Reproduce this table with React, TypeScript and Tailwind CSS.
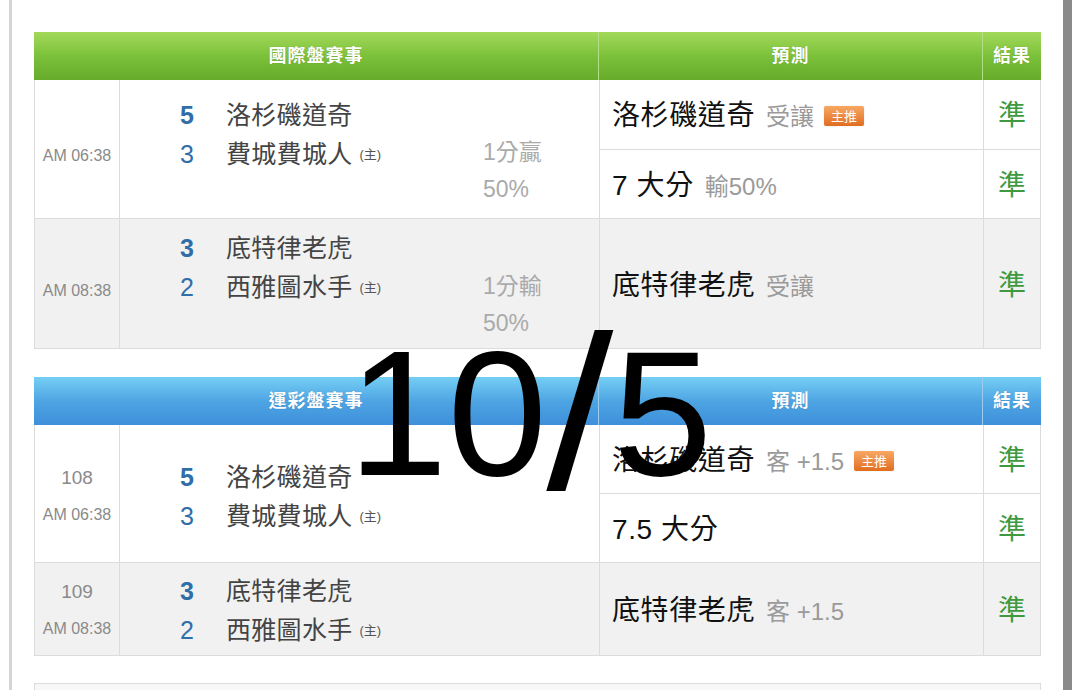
import React from 'react';

type Team = { score: string; bold?: boolean; name: string; home?: boolean };
type Pred = { main: string; sub?: string; badge?: boolean; result: string };
type RowData = {
  times: string[];
  teams: Team[];
  handicap?: string[];
  preds: Pred[];
  gray?: boolean;
  h: string;
  timePad: string;
  matchPad: string;
};

const Badge = () => (
  <span className="self-center ml-[10px] inline-flex items-center justify-center w-[40px] h-[20px] rounded-[2px] bg-linear-to-b from-[#f7a862] to-[#e06d1d] text-white text-[13px] leading-none shadow-[0_0_1px_rgba(0,0,0,0.3)]">
    主推
  </span>
);

function MatchRow({ r }: { r: RowData }) {
  return (
    <div
      className={`grid grid-cols-[85px_480px_1fr] border-b border-[#dcdcdc] ${r.gray ? 'bg-[#f1f1f1]' : 'bg-white'} ${r.h}`}
    >
      <div className={`flex flex-col items-center justify-center border-r border-[#dcdcdc] text-[#8a8a8a] ${r.timePad}`}>
        {r.times.map((t, i) =>
          r.times.length > 1 && i === 0 ? (
            <div key={i} className="text-[19px] leading-[37px]">{t}</div>
          ) : (
            <div key={i} className="text-[16px] leading-[37px]">{t}</div>
          )
        )}
      </div>
      <div className={`flex items-center pl-[55px] border-r border-[#dcdcdc] ${r.matchPad}`}>
        <div className="flex">
          <div className="w-[308px]">
            {r.teams.map((t, i) => (
              <div key={i} className="flex items-center h-[39px]">
                <span className={`w-[24px] text-center text-[25px] text-[#2f6ea8] ${t.bold ? 'font-bold' : ''}`}>{t.score}</span>
                <span className="ml-[27px] text-[25px] tracking-[0.3px] text-[#444]">{t.name}</span>
                {t.home && <span className="ml-[7px] text-[13px] text-[#555]">(主)</span>}
              </div>
            ))}
          </div>
          {r.handicap && (
            <div className="mt-[38px] text-[23px] leading-[37px] text-[#aaaaaa]">
              {r.handicap.map((h, i) => (
                <div key={i}>{h}</div>
              ))}
            </div>
          )}
        </div>
      </div>
      <div className="flex flex-col">
        {r.preds.map((p, i) => (
          <div
            key={i}
            className={`flex-1 grid grid-cols-[384px_1fr] ${i < r.preds.length - 1 ? 'border-b border-[#dcdcdc]' : ''}`}
          >
            <div className="flex items-baseline self-stretch pl-[12px] pt-[4px] border-r border-[#dcdcdc]">
              <div className="flex items-baseline self-center">
                <span className="text-[28px] tracking-[0.6px] text-[#111]">{p.main}</span>
                {p.sub && <span className="ml-[11px] text-[24px] text-[#9a9a9a]">{p.sub}</span>}
                {p.badge && <Badge />}
              </div>
            </div>
            <div className="flex items-center justify-center pt-[4px] text-[28px] text-[#3f9a3f]">{p.result}</div>
          </div>
        ))}
      </div>
    </div>
  );
}

function Table({ title, headerCls, dividerCls, rows }: { title: string; headerCls: string; dividerCls: string; rows: RowData[] }) {
  return (
    <div>
      <div className={`grid grid-cols-[565px_384px_1fr] h-[48px] text-white font-bold text-[18px] tracking-[1px] [text-shadow:0_0_1px_rgba(0,0,0,0.25)] ${headerCls}`}>
        <div className={`flex items-center justify-center border-r ${dividerCls}`}>{title}</div>
        <div className={`flex items-center justify-center border-r ${dividerCls}`}>預測</div>
        <div className="flex items-center justify-center">結果</div>
      </div>
      <div className="border-x border-[#dcdcdc]">
        {rows.map((r, i) => (
          <MatchRow key={i} r={r} />
        ))}
      </div>
    </div>
  );
}

const table1: RowData[] = [
  {
    times: ['AM 06:38'],
    teams: [
      { score: '5', bold: true, name: '洛杉磯道奇' },
      { score: '3', name: '費城費城人', home: true },
    ],
    handicap: ['1分贏', '50%'],
    preds: [
      { main: '洛杉磯道奇', sub: '受讓', badge: true, result: '準' },
      { main: '7 大分', sub: '輸50%', result: '準' },
    ],
    h: 'h-[139px]',
    timePad: 'pt-[12px]',
    matchPad: 'pt-[6px]',
  },
  {
    times: ['AM 08:38'],
    teams: [
      { score: '3', bold: true, name: '底特律老虎' },
      { score: '2', name: '西雅圖水手', home: true },
    ],
    handicap: ['1分輸', '50%'],
    preds: [{ main: '底特律老虎', sub: '受讓', result: '準' }],
    gray: true,
    h: 'h-[130px]',
    timePad: 'pt-[14px]',
    matchPad: 'pt-[4px]',
  },
];

const table2: RowData[] = [
  {
    times: ['108', 'AM 06:38'],
    teams: [
      { score: '5', bold: true, name: '洛杉磯道奇' },
      { score: '3', name: '費城費城人', home: true },
    ],
    preds: [
      { main: '洛杉磯道奇', sub: '客 +1.5', badge: true, result: '準' },
      { main: '7.5 大分', result: '準' },
    ],
    h: 'h-[138px]',
    timePad: 'pt-[4px]',
    matchPad: 'pt-[8px]',
  },
  {
    times: ['109', 'AM 08:38'],
    teams: [
      { score: '3', bold: true, name: '底特律老虎' },
      { score: '2', name: '西雅圖水手', home: true },
    ],
    preds: [{ main: '底特律老虎', sub: '客 +1.5', result: '準' }],
    gray: true,
    h: 'h-[93px]',
    timePad: 'pt-[2px]',
    matchPad: 'pt-[4px]',
  },
];

export default function App() {
  return (
    <div className="relative w-[1080px] h-[690px] overflow-hidden bg-white font-['Liberation_Sans','Noto_Sans_CJK_TC',sans-serif]">
      <div className="flex h-full">
        <div className="w-[9px]" />
        <div className="w-[3px] bg-[#d4d4d4]" />
        <div className="flex-1 pt-[32px] px-[22px]">
          <Table
            title="國際盤賽事"
            headerCls="bg-linear-to-b from-[#a3d95a] via-[#7cc13a] to-[#66ab2a]"
            dividerCls="border-[#b3de86]"
            rows={table1}
          />
          <div className="mt-[28px]">
            <Table
              title="運彩盤賽事"
              headerCls="bg-linear-to-b from-[#75cff4] via-[#4ea5e3] to-[#3e8fda]"
              dividerCls="border-[#9ccdf1]"
              rows={table2}
            />
          </div>
          <div className="mt-[27px] h-[40px] border border-[#dcdcdc] bg-[#f7f7f7]" />
        </div>
        <div className="w-[9px] bg-[#8a8a8a]" />
        <div className="w-[8px]" />
      </div>
      <div className="absolute left-[348px] top-[324px] flex items-baseline text-[179px] leading-none text-black font-['Liberation_Sans',sans-serif]">
        <span>10</span>
        <span className="inline-block mx-[8px] scale-x-[1.35] scale-y-[1.22]">/</span>
        <span>5</span>
      </div>
    </div>
  );
}
